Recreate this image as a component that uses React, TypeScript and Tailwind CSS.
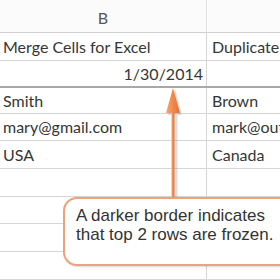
import React from "react";

const cellFont = { fontFamily: "Lato, 'Open Sans', sans-serif" };

function Row({ h, b, c, border = "border-b border-[#d6d6d6]", bRight = false }: { h: string; b?: React.ReactNode; c?: React.ReactNode; border?: string; bRight?: boolean }) {
  return (
    <div className={`flex box-border ${h} ${border}`}>
      <div className={`w-[207px] shrink-0 border-r border-[#d6d6d6] flex items-center px-[3px] ${bRight ? "justify-end" : ""}`}>{b}</div>
      <div className="flex-1 flex items-center px-[5px] whitespace-nowrap overflow-hidden">{c}</div>
    </div>
  );
}

export default function App() {
  return (
    <div className="relative w-[280px] h-[280px] overflow-hidden bg-white text-[#363636] text-[16px] leading-none" style={cellFont}>
      <div className="flex box-border h-[33px] border-b border-[#cfcfcf] bg-[#fbfbfb]">
        <div className="w-[207px] shrink-0 border-r border-[#e2e2e2] flex items-center justify-center text-[#555] pt-[4px]">B</div>
        <div className="flex-1" />
      </div>
      <Row h="h-[28px]" b="Merge Cells for Excel" c="Duplicate Remover" />
      <Row h="h-[27px]" b="1/30/2014" bRight border="border-b-2 border-[#a8a8a8]" />
      <Row h="h-[26px]" b="Smith" c="Brown" />
      <Row h="h-[27px]" b="mary@gmail.com" c="mark@outlook.com" />
      <Row h="h-[28px]" b="USA" c="Canada" />
      <Row h="h-[28px]" />
      <Row h="h-[27px]" />
      <Row h="h-[28px]" />
      <Row h="h-[28px]" />

      <svg className="absolute left-[164px] top-[85px]" width="22" height="116" viewBox="0 0 22 116">
        <defs>
          <linearGradient id="ag" x1="0" x2="1" y1="0" y2="0">
            <stop offset="0" stopColor="#f7a774" />
            <stop offset="0.5" stopColor="#f0884a" />
            <stop offset="1" stopColor="#e0733a" />
          </linearGradient>
        </defs>
        <polygon points="11,4 18,30 4,30" fill="#9a9a9a" opacity="0.35" />
        <rect x="10.5" y="30" width="3" height="84" fill="#9a9a9a" opacity="0.35" />
        <polygon points="9,3 16,28 2,28" fill="url(#ag)" />
        <rect x="7.5" y="27" width="3" height="86" fill="url(#ag)" />
      </svg>

      <div
        className="absolute left-[63px] top-[197px] w-[260px] h-[69px] rounded-[14px] border-2 border-[#eca27b] bg-white pl-[11px] pt-[7px] text-[#333333] text-[17px] leading-[19px] shadow-[1px_1px_2px_rgba(0,0,0,0.15)]"
        style={{ fontFamily: "'Liberation Sans', Arial, sans-serif" }}
      >
        <div className="whitespace-nowrap">A darker border indicates</div>
        <div className="whitespace-nowrap">that top 2 rows are frozen.</div>
      </div>
    </div>
  );
}
